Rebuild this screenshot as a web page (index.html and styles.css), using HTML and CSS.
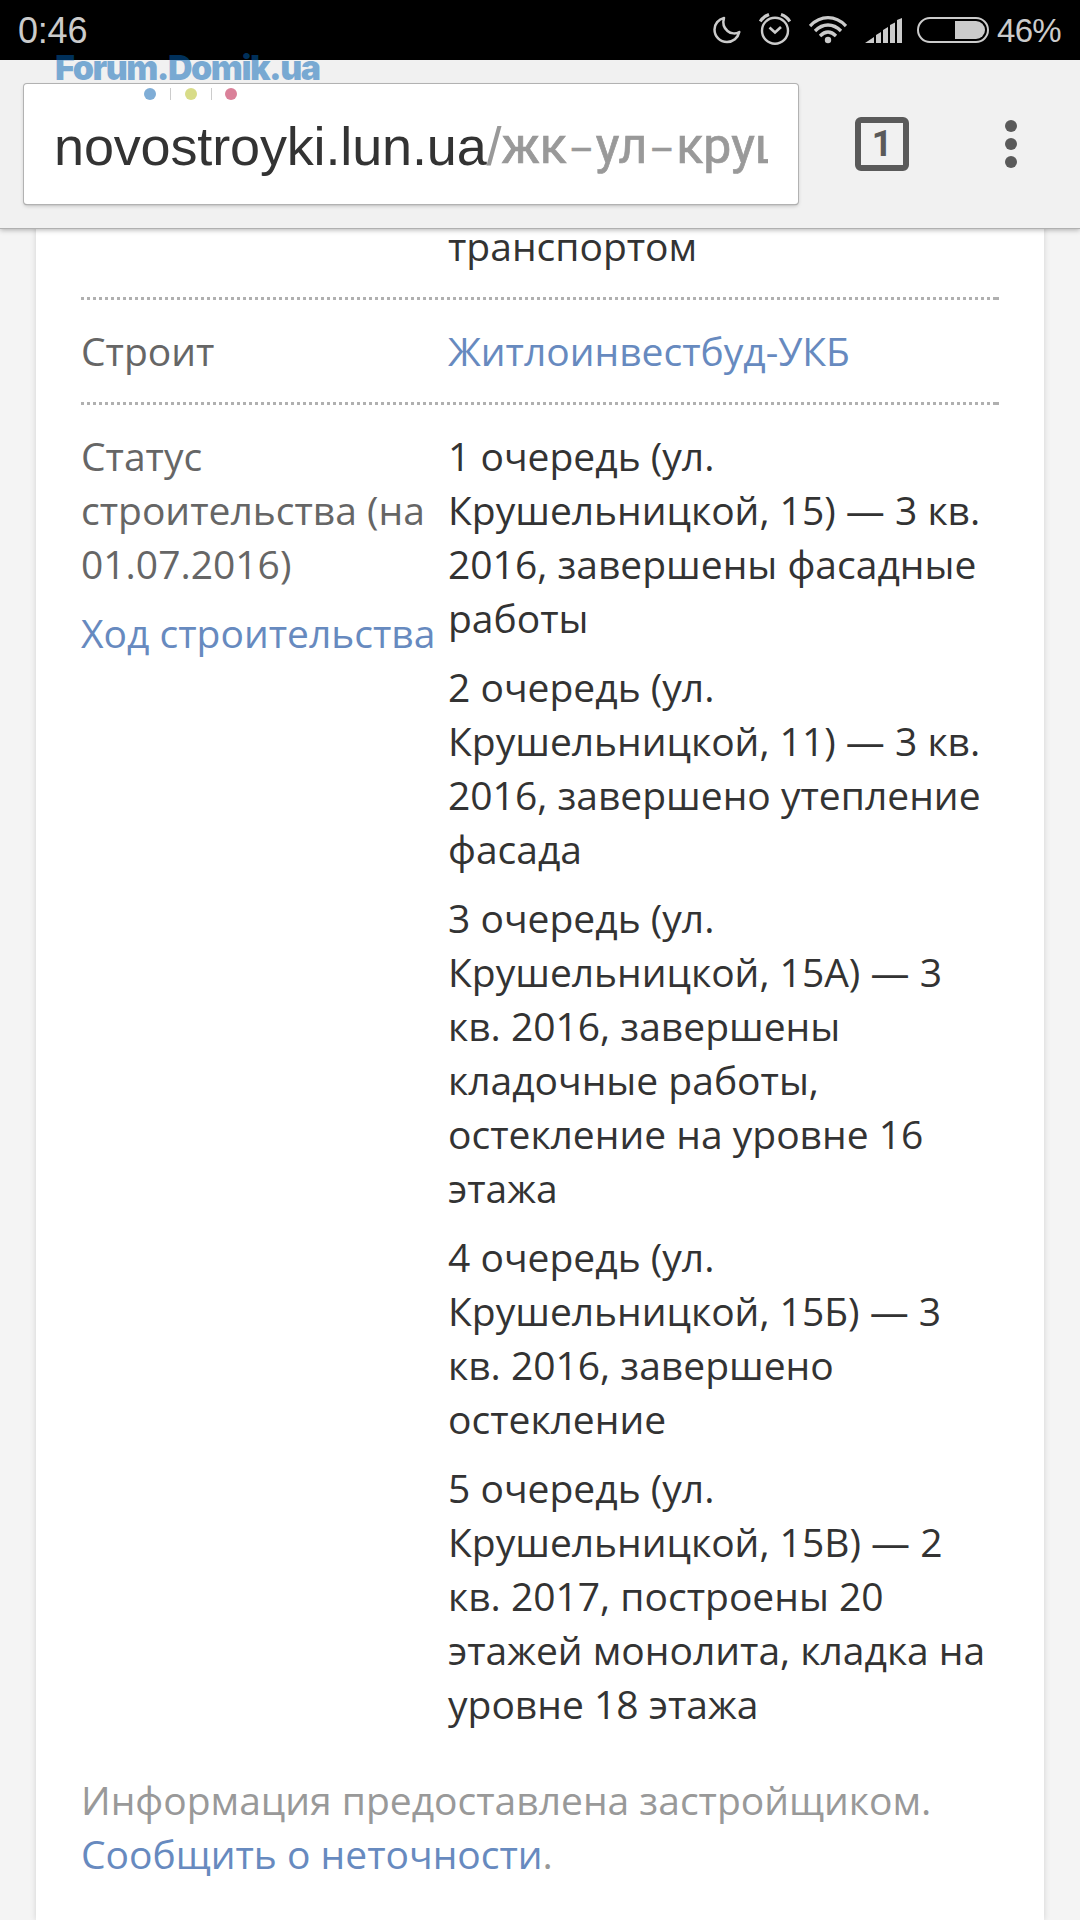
FILE: index.html
```html
<!DOCTYPE html>
<html lang="ru">
<head>
<meta charset="utf-8">
<title>novostroyki.lun.ua</title>
<link rel="stylesheet" href="styles.css">
</head>
<body>
<header class="status">
  <span class="clock">0:46</span>
  <div class="indicators">
    <svg class="moon" width="28" height="28" viewBox="0 0 28 28"><path d="M11 2C5.500 3.200 1.500 8 1.500 13.500C1.500 20.500 7 26 14 26C20 26 25 22 26.300 16C23 18 18 18 14.500 15C10.500 11.500 9.500 7 11 2Z" fill="none" stroke="currentColor" stroke-width="2.500" stroke-linejoin="round"/></svg>
    <svg class="alarm" width="32" height="32" viewBox="0 0 32 32" fill="none" stroke="currentColor"><circle cx="16" cy="17.700" r="13" stroke-width="2.400"/><path d="M10.500 14.500L16 19.500L22 14" stroke-width="2.700"/><path d="M1.200 8.500Q4 3.500 10 1.500M30.800 8.500Q28 3.500 22 1.500" stroke-width="3.200"/></svg>
    <svg class="wifi" width="38" height="28" viewBox="0 0 38 28" fill="none" stroke="currentColor" stroke-width="3.300"><path d="M1 10Q9 1.700 19 1.700T37 10M6 15Q12 9 19 9T32 15M11 20Q15 16 19 16T27 20"/><circle cx="19" cy="24" r="3.200" fill="currentColor" stroke="none"/></svg>
    <svg class="signal" width="37" height="26" viewBox="0 0 37 26" fill="currentColor"><path d="M0 25L9 19V25ZM11 17L16 14V25H11ZM18 12L23 9V25H18ZM25 7L30 4.500V25H25ZM32 2L37 0V25H32Z"/></svg>
    <svg class="battery" width="72" height="26" viewBox="0 0 72 26"><rect x="1" y="1" width="70" height="24" rx="12" fill="none" stroke="currentColor" stroke-width="2"/><path d="M38 4H59A9 9 0 0 1 59 22H38Z" fill="currentColor"/></svg>
    <span class="percent">46%</span>
  </div>
</header>
<div class="toolbar">
  <div class="address"><div class="url"><span class="host">novostroyki.lun.ua</span><span class="slash">/</span><span class="path">жк<span class="dash">–</span>ул<span class="dash">–</span>круш</span></div></div>
  <div class="tabs">1</div>
  <div class="menu"><i></i><i></i><i></i></div>
  <div class="watermark">
    <div class="brand">Forum.Domik.ua</div>
    <div class="dots"><i class="dot blue"></i><i class="bar"></i><i class="dot lime"></i><i class="bar"></i><i class="dot pink"></i></div>
  </div>
</div>
<main class="card">
  <section class="row first"><div class="label"></div><div class="value">транспортом</div></section>
  <section class="row"><div class="label">Строит</div><div class="value"><a>Житлоинвестбуд-УКБ</a></div></section>
  <section class="row">
    <div class="label"><p>Статус<br>строительства (на<br>01.07.2016)</p><p><a>Ход строительства</a></p></div>
    <div class="value">
      <p>1 очередь (ул.<br>Крушельницкой, 15) — 3 кв.<br>2016, завершены фасадные<br>работы</p>
      <p>2 очередь (ул.<br>Крушельницкой, 11) — 3 кв.<br>2016, завершено утепление<br>фасада</p>
      <p>3 очередь (ул.<br>Крушельницкой, 15А) — 3<br>кв. 2016, завершены<br>кладочные работы,<br>остекление на уровне 16<br>этажа</p>
      <p>4 очередь (ул.<br>Крушельницкой, 15Б) — 3<br>кв. 2016, завершено<br>остекление</p>
      <p>5 очередь (ул.<br>Крушельницкой, 15В) — 2<br>кв. 2017, построены 20<br>этажей монолита, кладка на<br>уровне 18 этажа</p>
    </div>
  </section>
  <footer class="note">Информация предоставлена застройщиком.<br><a>Сообщить о неточности</a>.</footer>
</main>
</body>
</html>
```
FILE: styles.css
```css
* { box-sizing: border-box; }
body {
  margin: 0;
  width: 1080px;
  height: 1920px;
  overflow: hidden;
  display: flex;
  flex-direction: column;
  background: #f4f4f4;
  font: 39px/54px "Open Sans", sans-serif;
  color: #333;
}
p { margin: 0; }
p + p { margin-top: 15px; }
a { color: #678abf; }

.status {
  flex: none;
  height: 60px;
  padding: 0 18px;
  display: flex;
  justify-content: space-between;
  background: #000;
  color: #cbcbcb;
  font: 36px/62px "Liberation Sans", sans-serif;
}
.clock { letter-spacing: -0.2px; }
.indicators { display: flex; align-items: flex-start; }
.moon { margin: 16px 18px 0 0; }
.alarm { margin: 13px 18px 0 0; }
.wifi { margin: 16px 18px 0 0; }
.signal { margin: 18px 15px 0 0; }
.battery { margin: 17px 8px 0 0; }
.percent { font-size: 33px; line-height: 62px; width: 65px; letter-spacing: -0.7px; }

.toolbar {
  position: relative;
  z-index: 1;
  flex: none;
  height: 168px;
  padding: 24px 63px 0 24px;
  display: flex;
  align-items: flex-start;
  background: #f1f1f1;
  box-shadow: 0 1px 0 #b0b0b0, 0 2px 5px rgba(0, 0, 0, .3);
}
.address {
  width: 774px;
  height: 120px;
  padding: 0 30px 0 30px;
  border-radius: 3px;
  background: #fff;
  box-shadow: 0 0 0 1px #b2b2b2, 0 1px 1px #888, 0 2px 4px rgba(0, 0, 0, .2);
}
.url {
  height: 120px;
  overflow: hidden;
  white-space: nowrap;
  font: 54px/124px "Liberation Sans", sans-serif;
}
.host { letter-spacing: -0.15px; }
.slash, .path { color: #999; }
.path {
  position: relative;
  top: -2px;
  font-family: Roboto, sans-serif;
  font-size: 50px;
  font-weight: 400;
  -webkit-text-stroke: 0.7px #999;
}
.dash { font-size: 38px; padding: 0 2px; }
.tabs {
  width: 54px;
  height: 54px;
  margin: 33px 0 0 57px;
  border: 6px solid #5a5a5a;
  border-radius: 6px;
  text-align: center;
  color: #5a5a5a;
  font: 700 36px/43px Roboto, sans-serif;
}
.menu { margin: 36px 0 0 auto; display: flex; flex-direction: column; gap: 6px; }
.menu i { width: 12px; height: 12px; border-radius: 50%; background: #5a5a5a; }

.watermark { position: absolute; left: 54px; top: -9px; width: 270px; }
.brand {
  font: 900 34px/34px Inter, sans-serif;
  letter-spacing: -1.5px;
  text-indent: 1px;
  color: rgba(0, 97, 180, .5);
  white-space: nowrap;
}
.dots { display: flex; align-items: center; gap: 13.85px; margin: 3px 0 0 90px; }
.dot { width: 12px; height: 12px; border-radius: 50%; }
.blue { background: #7fadd6; }
.lime { background: #d8dc88; }
.pink { background: #da8199; }
.bar { width: 1px; height: 12px; background: #ccc; }

.card {
  flex: 1;
  width: 1008px;
  margin: -36px auto 0;
  padding: 0 45px;
  background: #fff;
  box-shadow: 0 0 6px rgba(0, 0, 0, .14);
}
.row {
  display: grid;
  grid-template-columns: 367px 1fr;
  padding: 27px 0 24px;
  background:
    linear-gradient(#b0b0b0, #b0b0b0) right top / 3px 3px no-repeat,
    linear-gradient(90deg, #b0b0b0 50%, transparent 50%) left top / 6px 3px repeat-x;
}
.first { background: none; }
.label { color: #666; white-space: nowrap; }
.note { margin-top: 18px; color: #999; }
```
